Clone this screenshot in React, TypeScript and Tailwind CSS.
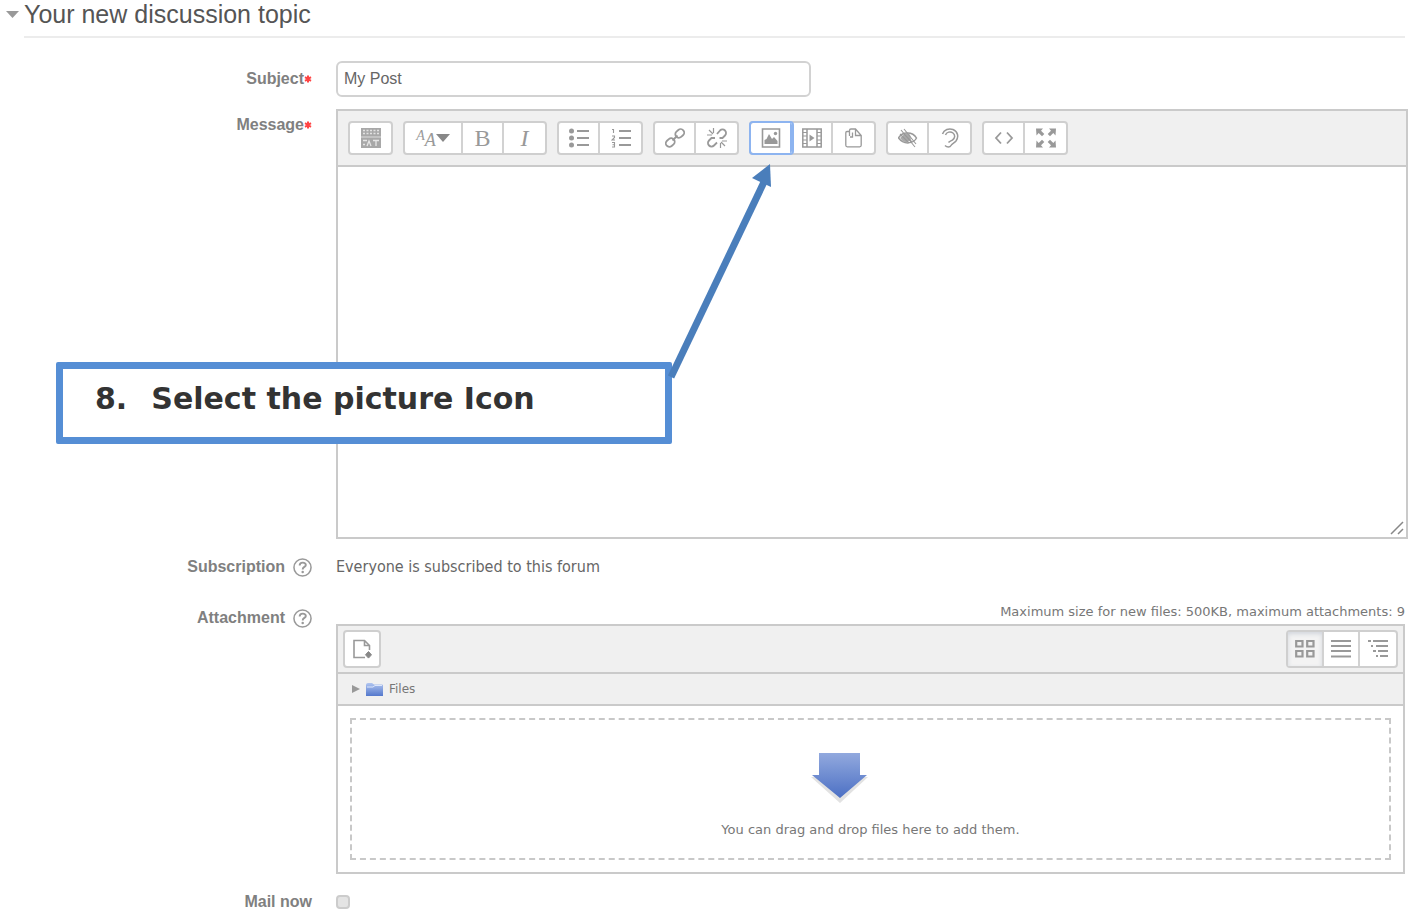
import clsx from "clsx";
import type { ReactNode } from "react";

const Svg = ({ children, className = "h-5 w-5" }: { children: ReactNode; className?: string }) => (
  <svg viewBox="0 0 20 20" fill="none" stroke="#999" strokeWidth="1.5" className={className} aria-hidden="true">
    {children}
  </svg>
);

const icons = {
  toolbar: (
    <Svg>
      <path d="M0 0h20v20H0z" fill="#a8a8a8" stroke="none" />
      <path d="M2 2.500h16M2 5.500h16" stroke="#e2e2e2" strokeDasharray="2 1.500" strokeWidth="1.300" />
      <path d="M0 9h20" stroke="#dedede" strokeWidth="1" />
      <path d="M2 12.500h4M2 16.500h2M6 18l2-5 2 5M12 12.500h6M15 13v5" stroke="#e6e6e6" strokeWidth="1.300" />
    </Svg>
  ),
  bullets: (
    <Svg>
      <path d="M8 3h12M8 10h12M8 17h12" strokeWidth="1.800" />
      <g fill="#999" stroke="none">
        <circle cx="2.500" cy="3" r="2.500" />
        <circle cx="2.500" cy="10" r="2.500" />
        <circle cx="2.500" cy="17" r="2.500" />
      </g>
    </Svg>
  ),
  numbers: (
    <Svg>
      <path d="M8 3h12M8 10h12M8 17h12" strokeWidth="1.800" />
      <path d="M1 1.500h1.500V5M1 8h2.500v1.500L1 12h3M1 14.500h2.500V19H1M1.500 16.800h2" strokeWidth="1.100" />
    </Svg>
  ),
  link: (
    <Svg>
      <rect x="10" y="2" width="9.500" height="7" rx="3.500" transform="rotate(-42 14.700 5.500)" strokeWidth="1.800" />
      <rect x="0.500" y="11" width="9.500" height="7" rx="3.500" transform="rotate(-42 5.300 14.500)" strokeWidth="1.800" />
      <path d="M7.500 12.500l5-5" strokeWidth="1.800" />
    </Svg>
  ),
  unlink: (
    <Svg>
      <path d="M10 6l3-3.500a3.500 3.500 0 0 1 5 5L15.500 10h-3M8 10H4.500L2 12.500a3.500 3.500 0 0 0 5 5l3-3" strokeWidth="1.800" />
      <path d="M6.500 0v5M0 7h5M2 2l4 4M13.500 15v5M15 13h5M14 14l4 4" strokeWidth="1.200" />
    </Svg>
  ),
  picture: (
    <Svg>
      <path d="M1.500 1h17v18h-17z" strokeWidth="1.600" />
      <path d="M3.500 16v-4l2-1 2.500-5 3 5 2-2 3.500 4v3z" fill="#999" stroke="none" />
      <circle cx="14.500" cy="5.500" r="1.700" fill="#999" stroke="none" />
    </Svg>
  ),
  media: (
    <Svg>
      <path d="M.8 1h18.400v18H.8zM5 1v18M15 1v18" />
      <path d="M1 4.500h4M1 8h4M1 12h4M1 15.500h4M15 4.500h4M15 8h4M15 12h4M15 15.500h4" strokeWidth="1.200" />
      <path d="M7.500 6.500v7l5-3.500z" fill="#999" stroke="none" />
    </Svg>
  ),
  files: (
    <Svg>
      <path d="M5.500 3.500H3A1.200 1.200 0 0 0 1.800 4.700v12.600A1.500 1.500 0 0 0 3.300 18.800h12.400a1.500 1.500 0 0 0 1.500-1.500V7.500L11.500 1H7a1.500 1.500 0 0 0-1.500 1.500V8M11.500 1.500v6h5.500M8.500 4.500V9H6" strokeWidth="1.300" />
    </Svg>
  ),
  hidden: (
    <Svg>
      <path d="M.5 10C4 3.500 14.500 3 18.500 10c-3 6-13 7-18 0z" strokeWidth="1.500" />
      <path d="M2 10l5-4.500 5 1 1 5-4 3-4-1z" fill="#aaa" stroke="none" />
      <path d="M3 2l14 17M6 1l12 15M2 6l9 9M5 5l9 9" strokeWidth="1.100" />
    </Svg>
  ),
  ear: (
    <Svg>
      <path d="M2.500 6C4 1.500 9 0 13 1.500c5 2 6 7.500 3 11.500-2 2.500-4 2.500-5 4.500s-4 2-6 0M5.500 7c1-3 5-4 7.500-2s2 5.500-.5 7c-1.500 1-3 1-4 2.500" strokeWidth="1.500" />
    </Svg>
  ),
  code: (
    <Svg>
      <path d="M7 4.500L2 10l5 5.500M13 4.500l5 5.500-5 5.500" strokeWidth="1.800" />
    </Svg>
  ),
  expand: (
    <Svg>
      <path d="M0 .5h7L5 2.700l3.300 3.300L6 8.200 2.700 5 .5 7.500zM20 .5h-7l2 2.200L11.700 6 14 8.200 17.300 5l2.200 2.500zM0 19.500h7l-2-2.200L8.300 14 6 11.800 2.700 15 .5 12.500zM20 19.500h-7l2-2.200-3.300-3.300 2.300-2.200 3.300 3.200 2.200-2.500z" fill="#999" stroke="none" />
    </Svg>
  ),
  addFile: (
    <Svg>
      <path d="M13 18.500H2V1.500h10.500l5 5V11M12.500 1.500v5h5" strokeWidth="1.600" />
      <path d="M16.500 12.500l3 3.300-3 3.300-3-3.300z" fill="#888" stroke="#888" strokeWidth="1" />
    </Svg>
  ),
  grid: (
    <Svg>
      <path d="M1.200 2h6.300v5.500H1.200zM12.200 2h6.300v5.500h-6.300zM1.200 12h6.300v5.500H1.200zM12.200 12h6.300v5.500h-6.300z" strokeWidth="2.200" />
    </Svg>
  ),
  list: (
    <Svg>
      <path d="M0 2h20M0 7h20M0 12h20M0 17.500h20" strokeWidth="2" />
    </Svg>
  ),
  tree: (
    <Svg>
      <path d="M0 2h3M5 2h15M3 7h2M8 7h12M5 12h3M10 12h10M8 17h2M12 17h8" strokeWidth="2" />
    </Svg>
  ),
};

type Tool = { label: string; icon: ReactNode; wide?: boolean; active?: boolean };

const toolGroups: Tool[][] = [
  [{ label: "Show/hide advanced buttons", icon: icons.toolbar }],
  [
    {
      label: "Paragraph styles",
      wide: true,
      icon: (
        <>
          <span className="pb-1 text-sm italic">A</span>
          <span className="pt-1 text-lg italic">A</span>
          <svg viewBox="0 0 14 8" className="h-2 w-3.5" aria-hidden="true">
            <path d="M0 0h14L7 8z" fill="#888" />
          </svg>
        </>
      ),
    },
    { label: "Bold", icon: <span className="text-2xl">B</span> },
    { label: "Italic", icon: <span className="text-2xl italic">I</span> },
  ],
  [
    { label: "Unordered list", icon: icons.bullets },
    { label: "Ordered list", icon: icons.numbers },
  ],
  [
    { label: "Link", icon: icons.link },
    { label: "Unlink", icon: icons.unlink },
  ],
  [
    { label: "Image", icon: icons.picture, active: true },
    { label: "Media", icon: icons.media },
    { label: "Manage files", icon: icons.files },
  ],
  [
    { label: "Accessibility checker", icon: icons.hidden },
    { label: "Screenreader helper", icon: icons.ear },
  ],
  [
    { label: "HTML", icon: icons.code },
    { label: "Full screen", icon: icons.expand },
  ],
];

const views = [
  { label: "Display with icons", icon: icons.grid, selected: true },
  { label: "Display with details", icon: icons.list, selected: false },
  { label: "Display as tree", icon: icons.tree, selected: false },
];

function ToolGroup({ tools }: { tools: Tool[] }) {
  return (
    <div className="flex divide-x-2 divide-[#d2d2d2] rounded-sm border-2 border-[#cfcfcf] bg-white">
      {tools.map((tool) => (
        <button
          key={tool.label}
          type="button"
          aria-label={tool.label}
          className={clsx(
            "flex h-[30px] items-center justify-center font-['Liberation_Serif',serif] leading-none text-[#999]",
            tool.wide ? "w-[58px]" : "w-[41px]",
            tool.active && "rounded-xs border-[#8db4f0] ring-2 ring-[#8db4f0]"
          )}
        >
          {tool.icon}
        </button>
      ))}
    </div>
  );
}

function Help({ label }: { label: string }) {
  return (
    <button type="button" aria-label={label} className="ml-2">
      <Svg className="h-[19px] w-[19px]">
        <circle cx="10" cy="10" r="9" strokeWidth="1.600" />
        <path d="M7 8c0-4 6.500-4 6.500-.7 0 2.200-3.300 2-3.300 4.700" strokeWidth="2" />
        <circle cx="10.200" cy="14.800" r="1.300" fill="#999" stroke="none" />
      </Svg>
    </button>
  );
}

function Row({ label, htmlFor, required, help, children, className, labelClassName }: {
  label: string;
  htmlFor?: string;
  required?: boolean;
  help?: boolean;
  children: ReactNode;
  className?: string;
  labelClassName?: string;
}) {
  return (
    <div className={clsx("flex gap-6", className)}>
      <div
        className={clsx(
          "flex h-6 w-[312px] shrink-0 items-center justify-end font-bold text-[#808080]",
          labelClassName
        )}
      >
        {htmlFor ? <label htmlFor={htmlFor}>{label}</label> : <span>{label}</span>}
        {required && (
          <svg viewBox="0 0 8 8" className="h-2 w-2" aria-label="Required">
            <path d="M4 .5v7M1 2.200l6 3.600M1 5.800l6-3.600" stroke="#f44" strokeWidth="2" />
          </svg>
        )}
        {help && <Help label={`Help with ${label}`} />}
      </div>
      <div className="min-w-0 flex-1">{children}</div>
    </div>
  );
}

function Editor() {
  return (
    <div className="relative border-2 border-[#cacaca] bg-white">
      <div className="flex flex-wrap gap-2.5 border-b-2 border-[#cacaca] bg-[#f0f0f0] p-2.5">
        {toolGroups.map((tools) => (
          <ToolGroup key={tools[0].label} tools={tools} />
        ))}
      </div>
      <textarea id="message" className="block h-[370px] w-full resize-none p-2 outline-none" />
      <svg viewBox="0 0 14 14" className="absolute right-0.5 bottom-0.5 h-3.5 w-3.5" aria-hidden="true">
        <path d="M1 13L13 1M8 13l5-5" stroke="#888" strokeWidth="1.500" />
      </svg>
    </div>
  );
}

function FileManager() {
  return (
    <div className="font-['DejaVu_Sans',sans-serif] text-[13px] text-[#777]">
      <p className="pt-1 pb-1 text-right leading-4">Maximum size for new files: 500KB, maximum attachments: 9</p>
      <div className="border-2 border-[#cacaca]">
        <div className="flex justify-between border-b-2 border-[#cacaca] bg-[#f0f0f0] px-[5px] py-1">
          <button
            type="button"
            aria-label="Add file"
            className="flex h-[38px] w-[38px] items-center justify-center rounded-sm border-2 border-[#cfcfcf] bg-white"
          >
            {icons.addFile}
          </button>
          <div className="flex divide-x-2 divide-[#d2d2d2] rounded-sm border-2 border-[#cfcfcf] bg-white">
            {views.map((view) => (
              <button
                key={view.label}
                type="button"
                aria-label={view.label}
                aria-pressed={view.selected}
                className={clsx(
                  "flex h-[34px] w-9 items-center justify-center",
                  view.selected && "bg-[#f3f3f3] inset-shadow-sm inset-shadow-gray-300"
                )}
              >
                {view.icon}
              </button>
            ))}
          </div>
        </div>
        <div className="flex h-8 items-center border-b-2 border-[#cacaca] bg-[#f0f0f0] px-3.5">
          <svg viewBox="0 0 8 8" className="h-2 w-2" aria-hidden="true">
            <path d="M0 0v8l8-4z" fill="#999" />
          </svg>
          <svg viewBox="0 0 17 13" className="ml-1.5 h-[13px] w-[17px]" aria-hidden="true">
            <defs>
              <linearGradient id="folder" x2="0" y2="1">
                <stop stopColor="#b0c5f0" />
                <stop offset="1" stopColor="#5478cc" />
              </linearGradient>
            </defs>
            <path d="M0 2Q0 0 2 0h4l2 1.500h8q1 0 1 1V13H0z" fill="url(#folder)" />
            <path d="M1 4h6l2-1.500h7" fill="none" stroke="#dce6fb" strokeWidth="1" />
          </svg>
          <a href="#files" className="ml-1.5 text-xs">Files</a>
        </div>
        <div className="p-3">
          <div className="flex h-[142px] flex-col items-center justify-center border-2 border-dashed border-[#c8c8c8] pt-3">
            <svg viewBox="0 0 60 54" className="mr-16 h-[54px] w-[60px]" aria-hidden="true">
              <defs>
                <linearGradient id="drop" x2="0" y2="1">
                  <stop stopColor="#92a9de" />
                  <stop offset="1" stopColor="#4c70c4" />
                </linearGradient>
              </defs>
              <path d="M10 4h41v21h8L31 51 2 25h8z" fill="#e2e2e2" />
              <path d="M10 1h41v22h7L31 46 3 23h7z" fill="url(#drop)" />
            </svg>
            <p className="mt-4 leading-4">You can drag and drop files here to add them.</p>
          </div>
        </div>
      </div>
    </div>
  );
}

function Callout() {
  return (
    <div className="absolute top-[362px] left-14">
      <div className="flex h-[82px] w-[616px] gap-6 rounded-xs border-[7px] border-[#558ed5] bg-white px-8 pt-3 font-['DejaVu_Sans',sans-serif] text-3xl font-bold text-[#333]">
        <span>8.</span>
        <span>Select the picture Icon</span>
      </div>
      <svg viewBox="0 0 108 216" className="absolute bottom-[64px] left-[612px] h-[216px] w-[108px]" aria-hidden="true">
        <path d="M3 213L96 18" stroke="#4a7ebb" strokeWidth="7" />
        <path d="M102 0L84 14l19 9z" fill="#4a7ebb" />
      </svg>
    </div>
  );
}

export default function App() {
  return (
    <div className="relative min-h-screen bg-white font-['Liberation_Sans',sans-serif] text-base text-[#666]">
      <form className="pr-5" onSubmit={(e) => e.preventDefault()}>
        <div className="flex pl-1.5 pr-[3px]">
          <button type="button" aria-label="Collapse section" className="flex h-7 w-[18px] shrink-0 items-center">
            <svg viewBox="0 0 13 7" className="h-[7px] w-[13px]" aria-hidden="true">
              <path d="M0 0h13L6.500 7z" fill="#999" />
            </svg>
          </button>
          <h1 className="h-[38px] flex-1 border-b-2 border-[#ececec] text-[25px] leading-7 text-[#555]">
            Your new discussion topic
          </h1>
        </div>

        <Row label="Subject" htmlFor="subject" required className="mt-[23px] items-center">
          <input
            id="subject"
            type="text"
            defaultValue="My Post"
            className="block h-9 w-[475px] max-w-full rounded-md border-2 border-[#d2d2d2] px-1.5"
          />
        </Row>
        <Row label="Message" htmlFor="message" required className="mt-3" labelClassName="mt-1">
          <Editor />
        </Row>
        <Row label="Subscription" help className="mt-4">
          <p className="font-['DejaVu_Sans_Condensed','Noto_Sans',sans-serif] leading-6">
            Everyone is subscribed to this forum
          </p>
        </Row>
        <Row label="Attachment" help className="mt-[21px] pr-[3px]" labelClassName="mt-1.5">
          <FileManager />
        </Row>
        <Row label="Mail now" htmlFor="mailnow" className="mt-4 items-center">
          <input
            id="mailnow"
            type="checkbox"
            className="block h-3.5 w-3.5 appearance-none rounded-sm border-2 border-[#ccc] bg-[#e4e4e4] checked:bg-[#558ed5]"
          />
        </Row>
      </form>
      <Callout />
    </div>
  );
}
